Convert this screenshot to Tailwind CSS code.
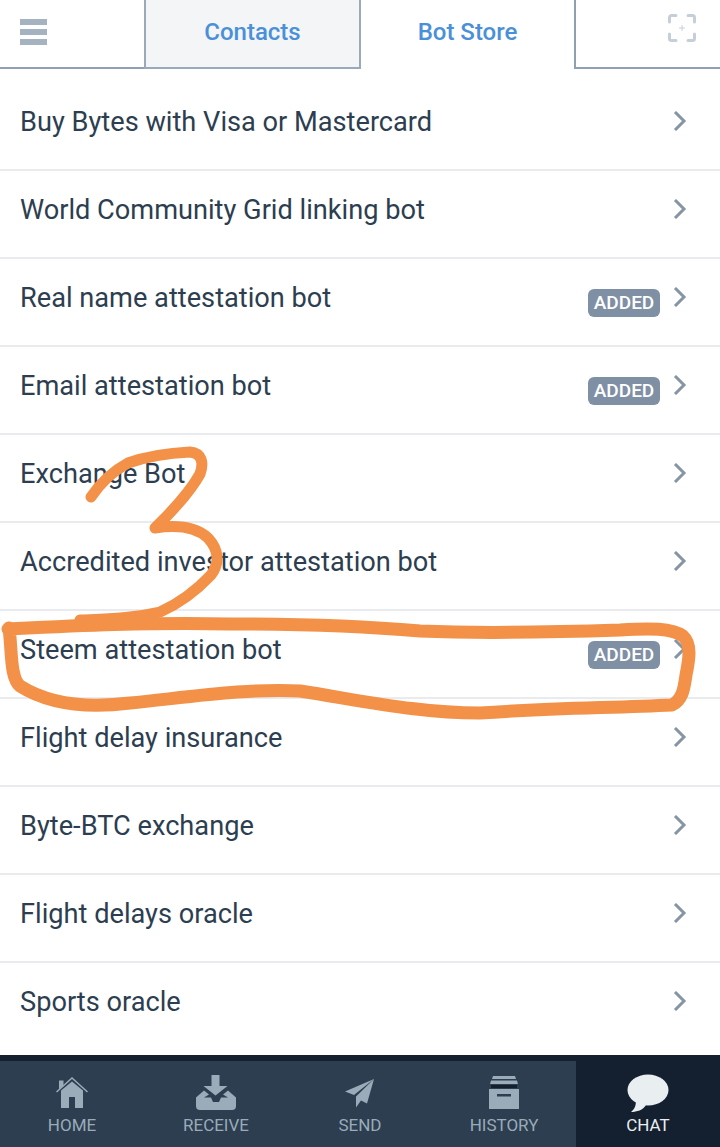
<!DOCTYPE html>
<html lang="en">

<head>
    <meta charset="UTF-8">
    <meta name="viewport" content="width=device-width, initial-scale=1.0">
    <title>Bot Store</title>
    <script src="https://cdn.jsdelivr.net/npm/@tailwindcss/browser@4"></script>
</head>

<body class="bg-white">
    <div class="relative w-[720px] h-[1147px] overflow-hidden flex flex-col bg-white font-[Roboto,sans-serif] text-[#2c3e50]">
        <!-- Tabs -->
        <div class="flex h-[69px] shrink-0">
            <div class="w-[144px] border-b-2 border-[#8fa0b1] pl-[20px] pt-[19px]">
                <div class="flex flex-col gap-[4px] w-[27px]">
                    <div class="h-[6px] bg-[#a5b2c0]"></div>
                    <div class="h-[6px] bg-[#a5b2c0]"></div>
                    <div class="h-[6px] bg-[#a5b2c0]"></div>
                </div>
            </div>
            <div class="w-[217px] bg-[#f4f5f7] border-l-2 border-r-2 border-b-2 border-[#9aaaba] flex justify-center pt-[18px] text-[24px] leading-[28px] font-medium text-[#4a90d9]">Contacts</div>
            <div class="w-[215px] border-r-2 border-[#8fa0b1] flex justify-center pt-[18px] text-[24px] leading-[28px] font-medium text-[#4a90d9]">Bot Store</div>
            <div class="w-[144px] border-b-2 border-[#8fa0b1] pl-[92px] pt-[14px]">
                <svg width="28" height="28" viewBox="0 0 28 28" fill="none" stroke="#c6cfd9" stroke-width="3" stroke-linecap="round" stroke-linejoin="round">
                    <path d="M1.5 8V3.5a2 2 0 0 1 2-2H8M20 1.5h4.500a2 2 0 0 1 2 2V8M26.500 20v4.500a2 2 0 0 1-2 2H20M8 26.500H3.500a2 2 0 0 1-2-2V20" />
                    <path d="M14 11.500v5M11.500 14h5" stroke-width="1" />
                </svg>
            </div>
        </div>

        <!-- Bot list -->
        <div class="flex-1 pt-[14px]">
            <div class="flex h-[88px] border-b-2 border-[#e9ebee] pl-[20px] pr-[33px] pt-[22px] text-[27.2px] leading-[34px]">
                <div class="flex-1">Buy Bytes with Visa or Mastercard</div>
                <svg class="mt-[6px]" width="14" height="20" viewBox="0 0 14 20" fill="none" stroke="#8595a6" stroke-width="3"><path d="M2 1l9 9-9 9" /></svg>
            </div>
            <div class="flex h-[88px] border-b-2 border-[#e9ebee] pl-[20px] pr-[33px] pt-[22px] text-[27.2px] leading-[34px]">
                <div class="flex-1">World Community Grid linking bot</div>
                <svg class="mt-[6px]" width="14" height="20" viewBox="0 0 14 20" fill="none" stroke="#8595a6" stroke-width="3"><path d="M2 1l9 9-9 9" /></svg>
            </div>
            <div class="flex h-[88px] border-b-2 border-[#e9ebee] pl-[20px] pr-[33px] pt-[22px] text-[27.2px] leading-[34px]">
                <div class="flex-1">Real name attestation bot</div>
                <div class="mt-[8px] mr-[13px] w-[72px] h-[28px] rounded-[6px] bg-[#7f8fa4] text-white text-[19px] leading-[28px] font-medium text-center">ADDED</div>
                <svg class="mt-[6px]" width="14" height="20" viewBox="0 0 14 20" fill="none" stroke="#8595a6" stroke-width="3"><path d="M2 1l9 9-9 9" /></svg>
            </div>
            <div class="flex h-[88px] border-b-2 border-[#e9ebee] pl-[20px] pr-[33px] pt-[22px] text-[27.2px] leading-[34px]">
                <div class="flex-1">Email attestation bot</div>
                <div class="mt-[8px] mr-[13px] w-[72px] h-[28px] rounded-[6px] bg-[#7f8fa4] text-white text-[19px] leading-[28px] font-medium text-center">ADDED</div>
                <svg class="mt-[6px]" width="14" height="20" viewBox="0 0 14 20" fill="none" stroke="#8595a6" stroke-width="3"><path d="M2 1l9 9-9 9" /></svg>
            </div>
            <div class="flex h-[88px] border-b-2 border-[#e9ebee] pl-[20px] pr-[33px] pt-[22px] text-[27.2px] leading-[34px]">
                <div class="flex-1">Exchange Bot</div>
                <svg class="mt-[6px]" width="14" height="20" viewBox="0 0 14 20" fill="none" stroke="#8595a6" stroke-width="3"><path d="M2 1l9 9-9 9" /></svg>
            </div>
            <div class="flex h-[88px] border-b-2 border-[#e9ebee] pl-[20px] pr-[33px] pt-[22px] text-[27.2px] leading-[34px]">
                <div class="flex-1">Accredited investor attestation bot</div>
                <svg class="mt-[6px]" width="14" height="20" viewBox="0 0 14 20" fill="none" stroke="#8595a6" stroke-width="3"><path d="M2 1l9 9-9 9" /></svg>
            </div>
            <div class="flex h-[88px] border-b-2 border-[#e9ebee] pl-[20px] pr-[33px] pt-[22px] text-[27.2px] leading-[34px]">
                <div class="flex-1">Steem attestation bot</div>
                <div class="mt-[8px] mr-[13px] w-[72px] h-[28px] rounded-[6px] bg-[#7f8fa4] text-white text-[19px] leading-[28px] font-medium text-center">ADDED</div>
                <svg class="mt-[6px]" width="14" height="20" viewBox="0 0 14 20" fill="none" stroke="#8595a6" stroke-width="3"><path d="M2 1l9 9-9 9" /></svg>
            </div>
            <div class="flex h-[88px] border-b-2 border-[#e9ebee] pl-[20px] pr-[33px] pt-[22px] text-[27.2px] leading-[34px]">
                <div class="flex-1">Flight delay insurance</div>
                <svg class="mt-[6px]" width="14" height="20" viewBox="0 0 14 20" fill="none" stroke="#8595a6" stroke-width="3"><path d="M2 1l9 9-9 9" /></svg>
            </div>
            <div class="flex h-[88px] border-b-2 border-[#e9ebee] pl-[20px] pr-[33px] pt-[22px] text-[27.2px] leading-[34px]">
                <div class="flex-1">Byte-BTC exchange</div>
                <svg class="mt-[6px]" width="14" height="20" viewBox="0 0 14 20" fill="none" stroke="#8595a6" stroke-width="3"><path d="M2 1l9 9-9 9" /></svg>
            </div>
            <div class="flex h-[88px] border-b-2 border-[#e9ebee] pl-[20px] pr-[33px] pt-[22px] text-[27.2px] leading-[34px]">
                <div class="flex-1">Flight delays oracle</div>
                <svg class="mt-[6px]" width="14" height="20" viewBox="0 0 14 20" fill="none" stroke="#8595a6" stroke-width="3"><path d="M2 1l9 9-9 9" /></svg>
            </div>
            <div class="flex h-[88px] pl-[20px] pr-[33px] pt-[22px] text-[27.2px] leading-[34px]">
                <div class="flex-1">Sports oracle</div>
                <svg class="mt-[6px]" width="14" height="20" viewBox="0 0 14 20" fill="none" stroke="#8595a6" stroke-width="3"><path d="M2 1l9 9-9 9" /></svg>
            </div>
        </div>

        <!-- Bottom menu -->
        <div class="flex h-[92px] shrink-0 bg-[#14202f] pt-[6px] text-[17px] leading-[20px] text-[#9aabb9]">
            <div class="w-[144px] bg-[#2c3e50] flex flex-col items-center pt-[16px]">
                <svg width="32" height="32" viewBox="0 0 32 32" fill="#9aabb9">
                    <path d="M3 12.500V3.500h4.500v5zM16 4.500l-11 9V31h8v-11h6v11h8V13.500z" />
                    <path d="M0.500 15L16 1l15.500 14" fill="none" stroke="#9aabb9" stroke-width="1.500" />
                </svg>
                <div class="mt-[6px]">HOME</div>
            </div>
            <div class="w-[144px] bg-[#2c3e50] flex flex-col items-center pt-[14px]">
                <svg width="42" height="36" viewBox="0 0 42 36" fill="#9aabb9">
                    <path d="M16.500 0h8v11h8L20.500 20.500 8.500 11h8z" />
                    <path d="M9 15.500l5 4-5 3h7l2 4.500h6l2-4.500h7l-5-3 5-4 8 7V31a4 4 0 0 1-4 4H5a4 4 0 0 1-4-4v-8.500z" />
                </svg>
                <div class="mt-[4px]">RECEIVE</div>
            </div>
            <div class="w-[144px] bg-[#2c3e50] flex flex-col items-center pt-[18px]">
                <svg width="30" height="30" viewBox="0 0 30 30" fill="#9aabb9">
                    <path d="M29 0L0 12.500l9 3.500zM29 0L11 17.500v11l5-7 6 3z" />
                </svg>
                <div class="mt-[6px]">SEND</div>
            </div>
            <div class="w-[144px] bg-[#2c3e50] flex flex-col items-center pt-[15px]">
                <svg width="30" height="33" viewBox="0 0 30 33" fill="#9aabb9">
                    <path d="M4 0h22l1 3H3zM2 4.500h26l1 3.500H1z" />
                    <path fill-rule="evenodd" d="M0 13h30v20H0zM8 18v2.500h14V18z" />
                    <path d="M2 9h26v3H2z" fill="#14202f" />
                </svg>
                <div class="mt-[6px]">HISTORY</div>
            </div>
            <div class="w-[144px] flex flex-col items-center pt-[13px] text-[#e9eef1]">
                <svg width="42" height="39" viewBox="0 0 42 39" fill="#e9eef1">
                    <ellipse cx="21" cy="16" rx="20.500" ry="15.500" />
                    <path d="M9 26c0 5-1 9-5 12 6 0 12-2 15-7z" />
                </svg>
                <div class="mt-[2px]">CHAT</div>
            </div>
        </div>

        <!-- Hand drawn marks over the list -->
        <svg class="absolute left-0 top-0 pointer-events-none" width="720" height="1147" viewBox="0 0 720 1147" fill="none" stroke="#f29147" stroke-width="11" stroke-linecap="round" stroke-linejoin="round">
            <path d="M91 497C101 482 113 471 128 463C145 457 170 453 190 452C202 453 204 463 200 474C190 492 175 508 161 522L155 528C175 525 195 526 208 538C219 550 220 563 211 575C195 592 178 604 160 612C130 619 105 619 80 620" />
            <path stroke-width="13" d="M8 629C70 626 150 622 230 624C300 624 360 626 420 631C490 634 560 632 620 630C650 628 672 628 683 636C692 644 689 660 686 675C684 690 682 700 672 705C610 708 550 708 480 713C420 713 370 702 300 691C250 688 190 697 130 703C90 708 50 705 20 686C10 678 12 650 9 628" />
        </svg>
    </div>
</body>

</html>
